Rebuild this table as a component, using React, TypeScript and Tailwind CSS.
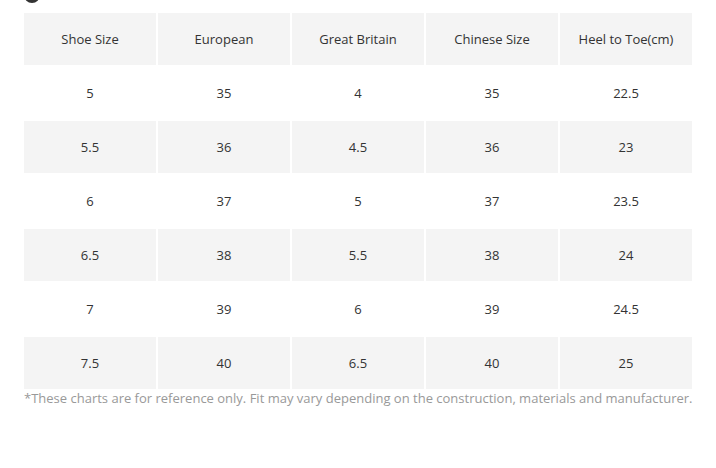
const headers = ["Shoe Size", "European", "Great Britain", "Chinese Size", "Heel to Toe(cm)"];

const rows = [
  ["5", "35", "4", "35", "22.5"],
  ["5.5", "36", "4.5", "36", "23"],
  ["6", "37", "5", "37", "23.5"],
  ["6.5", "38", "5.5", "38", "24"],
  ["7", "39", "6", "39", "24.5"],
  ["7.5", "40", "6.5", "40", "25"],
];

export default function App() {
  return (
    <div className="w-[716px] h-[468px] bg-white font-['Open_Sans',sans-serif] text-[13px] text-[#333]">
      <div className="h-[13px] pl-[24px] overflow-hidden">
        <div className="h-[3px] w-[16px] overflow-hidden">
          <div className="w-[16px] h-[16px] -mt-[13px] rounded-full bg-[#333]" />
        </div>
      </div>
      <div className="ml-[24px] w-[668px] flex flex-col gap-[2px]">
        <div className="grid grid-cols-5 gap-[2px]">
          {headers.map((h) => (
            <div key={h} className="h-[52px] pt-[2px] flex items-center justify-center bg-[#f4f4f4]">
              {h}
            </div>
          ))}
        </div>
        {rows.map((row, i) => (
          <div key={i} className="grid grid-cols-5 gap-[2px]">
            {row.map((c, j) => (
              <div
                key={j}
                className={
                  "h-[52px] pt-[2px] flex items-center justify-center " +
                  (i % 2 === 1 ? "bg-[#f4f4f4]" : "bg-white")
                }
              >
                {c}
              </div>
            ))}
          </div>
        ))}
      </div>
      <p className="ml-[24px] leading-[18px] text-[#999] whitespace-nowrap">
        *These charts are for reference only. Fit may vary depending on the construction, materials and manufacturer.
      </p>
    </div>
  );
}
